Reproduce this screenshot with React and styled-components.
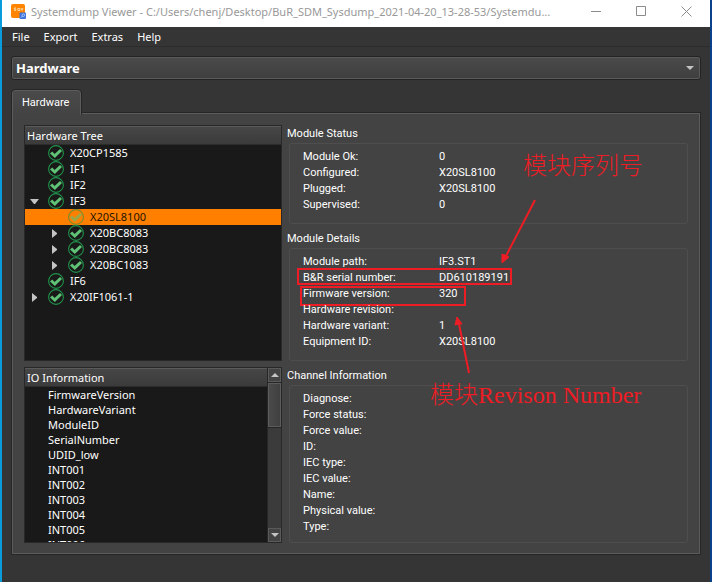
import React from "react";
import styled, { createGlobalStyle } from "styled-components";

const uiFont = `"Noto Sans", "Open Sans", sans-serif`;
const formFont = `Roboto, "Noto Sans", sans-serif`;
const red = "#ee1c24";

const GlobalStyle = createGlobalStyle`
  * { box-sizing: border-box; }
  body { margin: 0; background: #353535; }
  button, select { font: inherit; color: inherit; }
`;

const Desktop = styled.div`
  display: flex;
  height: 100vh;
  min-height: 560px;
  font: 11px/16px ${uiFont};
  color: #fff;
`;

const DesktopEdge = styled.div`
  flex: 0 0 2px;
  background: ${(p) => p.$color};
`;

const Window = styled.main`
  flex: 1;
  min-width: 0;
  display: flex;
  flex-direction: column;
  background: #353535;
`;

const TitleBar = styled.header`
  display: flex;
  align-items: center;
  height: 27px;
  flex: none;
  padding: 0 1px 4px 9px;
  gap: 5px;
  background: #fff;
  color: #999;
`;

const Title = styled.h1`
  flex: 1;
  min-width: 0;
  margin: 0;
  overflow: hidden;
  white-space: nowrap;
  font: 11px/20px ${uiFont};
`;

const WindowButtons = styled.div`
  display: flex;
  flex: none;
`;

const WindowButton = styled.button`
  width: 45px;
  height: 22px;
  padding: 0;
  border: 0;
  background: none;
  display: grid;
  place-items: center;
`;

const MenuBar = styled.nav`
  display: flex;
  gap: 14px;
  height: 20px;
  flex: none;
  padding-left: 10px;
  border-bottom: 1px solid #2c2c2c;
`;

const MenuButton = styled.button`
  padding: 0;
  border: 0;
  background: none;
  line-height: 20px;
`;

const Content = styled.div`
  flex: 1;
  min-height: 0;
  display: flex;
  flex-direction: column;
  padding: 9px 9px 28px;
`;

const ComboWrap = styled.div`
  display: grid;
  align-items: center;
  flex: none;
  height: 24px;
  margin-bottom: 10px;
  border: 1px solid #232323;
  border-radius: 3px;
  & > * { grid-area: 1 / 1; }
  & > svg { justify-self: end; margin-right: 6px; pointer-events: none; }
`;

const Combo = styled.select`
  appearance: none;
  width: 100%;
  height: 22px;
  padding: 0 20px 0 3px;
  border: 1px solid #5a5a5a;
  border-radius: 2px;
  background: linear-gradient(#4a4a4a, #3f3f3f);
  font: bold 13px/20px "Noto Sans", sans-serif;
`;

const Tab = styled.button`
  align-self: flex-start;
  position: relative;
  z-index: 1;
  height: 25px;
  flex: none;
  margin: 0 1px -2px;
  padding: 0 11px 0 9px;
  border: 1px solid #5c5c5c;
  border-bottom: 0;
  border-radius: 3px 3px 0 0;
  outline: 1px solid #262626;
  clip-path: inset(-1px -1px 0 -1px);
  background: linear-gradient(#4a4a4a, #434343);
  font-family: ${formFont};
`;

const TabPanel = styled.section`
  flex: 1;
  min-height: 0;
  display: grid;
  grid-template-columns: minmax(200px, 258fr) minmax(300px, 401fr);
  gap: 5px;
  margin: 0 1px;
  padding: 11px 11px 10px;
  border: 1px solid #5c5c5c;
  box-shadow: 0 0 0 1px #262626;
  background: #434343;
`;

const LeftColumn = styled.div`
  min-height: 0;
  display: flex;
  flex-direction: column;
  gap: 6px;
`;

const ListPane = styled.section`
  flex: ${(p) => p.$share} 1 0;
  min-height: 0;
  display: flex;
  overflow: hidden;
  border: 1px solid #282828;
  background: #191919;
`;

const ListBody = styled.div`
  flex: 1;
  min-width: 0;
`;

const ListHeader = styled.h2`
  height: 19px;
  margin: 0;
  padding-left: 2px;
  border-top: 1px solid #5a5a5a;
  border-bottom: 1px solid #2c2c2c;
  background: linear-gradient(#464646, #3b3b3b);
  font: 11px/18px ${uiFont};
`;

const PlainList = styled.ul`
  margin: 0;
  padding: 0;
  list-style: none;
`;

const TreeRow = styled.li`
  display: grid;
  grid-template-columns: 23px 16px 1fr;
  align-items: center;
  height: 16px;
  padding-left: ${(p) => p.$level * 20}px;
  background: ${(p) => (p.$selected ? "#ff8000" : "transparent")};
  color: ${(p) => (p.$selected ? "#1c1200" : "#fff")};
`;

const TreeLabel = styled.span`
  padding-left: 6px;
  white-space: nowrap;
`;

const Expander = styled.button`
  grid-column: 1;
  width: 19px;
  height: 16px;
  padding: 0;
  border: 0;
  background: none;
  display: grid;
  place-items: center;
`;

const StatusIcon = styled.svg`
  grid-column: 2;
  opacity: ${(p) => (p.$dim ? 0.6 : 1)};
`;

const IoRow = styled.li`
  height: 15px;
  padding-left: 23px;
  line-height: 15px;
`;

const ScrollBar = styled.div`
  flex: 0 0 14px;
  display: flex;
  flex-direction: column;
  border-left: 1px solid #262626;
  background: #3b3b3b;
`;

const ScrollButton = styled.button`
  height: 14px;
  padding: 0;
  border: 1px solid #5a5a5a;
  background: #434343;
  display: grid;
  place-items: center;
`;

const ScrollThumb = styled.div`
  height: 44px;
  margin-top: 1px;
  border: 1px solid #5c5c5c;
  outline: 1px solid #262626;
  background: linear-gradient(90deg, #4a4a4a, #404040);
`;

const ScrollSpace = styled.div`
  flex: 1;
`;

const RightColumn = styled.div`
  position: relative;
  display: flex;
  flex-direction: column;
  gap: 6px;
  font-family: ${formFont};
`;

const Group = styled.section`
  flex: ${(p) => (p.$fill ? "1" : "none")};
  display: flex;
  flex-direction: column;
`;

const GroupTitle = styled.h2`
  margin: 0;
  font: 11px/18px ${formFont};
`;

const GroupFrame = styled.dl`
  flex: 1;
  margin: 0 0 0 2px;
  padding: 5px 12px ${(p) => (p.$fill ? 7 : 10)}px 13px;
  border: 1px solid #4e4e4e;
  border-radius: 3px;
`;

const Field = styled.div`
  position: relative;
  display: grid;
  grid-template-columns: 136px 1fr;
  height: 16px;
  & > dt, & > dd { margin: 0; white-space: pre; }
`;

const Highlight = styled.span`
  position: absolute;
  top: ${(p) => p.$top}px;
  left: ${(p) => p.$left}px;
  width: ${(p) => p.$width}px;
  height: ${(p) => p.$height}px;
  border: 2px solid ${red};
`;

const Note = styled.p`
  position: absolute;
  top: ${(p) => p.$top}px;
  left: ${(p) => p.$left}px;
  margin: 0;
  color: ${red};
  font: 24px/30px "Liberation Serif", "Noto Sans CJK SC", serif;
  font-weight: 300;
  white-space: nowrap;
`;

const Arrows = styled.svg`
  position: absolute;
  top: 0;
  left: 0;
  pointer-events: none;
`;

const tree = [
  { name: "X20CP1585", level: 0 },
  { name: "IF1", level: 0 },
  { name: "IF2", level: 0 },
  { name: "IF3", level: 0, expander: "open" },
  { name: "X20SL8100", level: 1, selected: true },
  { name: "X20BC8083", level: 1, expander: "closed" },
  { name: "X20BC8083", level: 1, expander: "closed" },
  { name: "X20BC1083", level: 1, expander: "closed" },
  { name: "IF6", level: 0 },
  { name: "X20IF1061-1", level: 0, expander: "closed" },
];

const channels = [
  "FirmwareVersion", "HardwareVariant", "ModuleID", "SerialNumber", "UDID_low",
  "INT001", "INT002", "INT003", "INT004", "INT005", "INT006",
];

const statusFields = [
  ["Module Ok:", "0"],
  ["Configured:", "X20SL8100"],
  ["Plugged:", "X20SL8100"],
  ["Supervised:", "0"],
];

const detailFields = [
  ["Module path:", "IF3.ST1"],
  ["B&R serial number:", "DD610189191", { $top: -2, $left: -6, $width: 215, $height: 17 }],
  ["Firmware version:", "320", { $top: 0, $left: -3, $width: 166, $height: 20 }],
  ["Hardware revision:", ""],
  ["Hardware variant:", "1"],
  ["Equipment ID:", "X20SL8100"],
];

const channelFields = [
  "Diagnose:", "Force status:", "Force value:", "ID:", "IEC type:",
  "IEC value:", "Name:", "Physical value:", "Type:",
].map((label) => [label, ""]);

const triangles = {
  up: ["0,4 4,0 8,4", 8, 4],
  down: ["0,0 8,0 4,4", 8, 4],
  open: ["0,0 9,0 5,5 4,5", 9, 5],
  closed: ["0,0 5,4 5,5 0,9", 5, 9],
};

function Triangle({ kind }) {
  const [points, w, h] = triangles[kind];
  return (
    <svg width={w} height={h} aria-hidden="true">
      <polygon points={points} fill="#c4c4c4" />
    </svg>
  );
}

function Check({ dim }) {
  return (
    <StatusIcon width="16" height="16" viewBox="0 0 16 16" $dim={dim} aria-hidden="true">
      <circle cx="8" cy="8" r="7.4" fill="none" stroke="#20914a" strokeWidth="1.1" />
      <path d="M2 8.4 4.2 6.6 6.6 8.9 12 4 14 6 6.8 12.9Z" fill="#5fc276" />
    </StatusIcon>
  );
}

function AppIcon() {
  return (
    <svg width="15" height="15" viewBox="0 0 15 15" aria-hidden="true">
      <rect width="14" height="14" rx="2" fill="#ff8500" />
      <path d="M5 4H3.2V5.2H4.8V6.5H3M8.8 6.5V4.5H6.8V6.5H9M10 4l1 2.4L12 4" fill="none" stroke="#ffe3bd" strokeWidth=".8" />
      <rect x="8.5" y="8.5" width="6.5" height="6.5" rx="1" fill="#3b72dc" />
      <circle cx="12.3" cy="11.2" r="1.3" fill="none" stroke="#c3d8ff" strokeWidth=".8" />
      <path d="m11.4 12.1-1.6 1.6" stroke="#c3d8ff" strokeWidth=".8" />
    </svg>
  );
}

function FieldGroup({ title, fields, fill }) {
  return (
    <Group $fill={fill}>
      <GroupTitle>{title}</GroupTitle>
      <GroupFrame $fill={fill}>
        {fields.map(([label, value, mark]) => (
          <Field key={label}>
            <dt>{label}</dt>
            <dd>{value}</dd>
            {mark && <Highlight {...mark} />}
          </Field>
        ))}
      </GroupFrame>
    </Group>
  );
}

export default function App() {
  return (
    <Desktop>
      <GlobalStyle />
      <DesktopEdge $color="#0a9bdc" />
      <Window>
        <TitleBar>
          <AppIcon />
          <Title>Systemdump Viewer - C:/Users/chenj/Desktop/BuR_SDM_Sysdump_2021-04-20_13-28-53/Systemdu...</Title>
          <WindowButtons>
            <WindowButton aria-label="Minimize">
              <svg width="11" height="11"><path d="M0 5.5h10" stroke="#8c8c8c" /></svg>
            </WindowButton>
            <WindowButton aria-label="Maximize">
              <svg width="11" height="11"><path d="M.5.5h9v9h-9z" fill="none" stroke="#8c8c8c" /></svg>
            </WindowButton>
            <WindowButton aria-label="Close">
              <svg width="11" height="11"><path d="m.5.5 10 10m0-10-10 10" stroke="#8c8c8c" /></svg>
            </WindowButton>
          </WindowButtons>
        </TitleBar>
        <MenuBar>
          {["File", "Export", "Extras", "Help"].map((m) => <MenuButton key={m}>{m}</MenuButton>)}
        </MenuBar>
        <Content>
          <ComboWrap>
            <Combo aria-label="View" defaultValue="Hardware">
              <option>Hardware</option>
            </Combo>
            <Triangle kind="down" />
          </ComboWrap>
          <Tab role="tab" aria-selected="true">Hardware</Tab>
          <TabPanel role="tabpanel">
            <LeftColumn>
              <ListPane $share={236}>
                <ListBody>
                  <ListHeader>Hardware Tree</ListHeader>
                  <PlainList role="tree" aria-label="Hardware Tree">
                    {tree.map((n, i) => (
                      <TreeRow key={i} role="treeitem" aria-selected={!!n.selected} $level={n.level} $selected={n.selected}>
                        {n.expander && (
                          <Expander aria-label={n.expander === "open" ? "Collapse" : "Expand"}>
                            <Triangle kind={n.expander} />
                          </Expander>
                        )}
                        <Check dim={n.selected} />
                        <TreeLabel>{n.name}</TreeLabel>
                      </TreeRow>
                    ))}
                  </PlainList>
                </ListBody>
              </ListPane>
              <ListPane $share={176}>
                <ListBody>
                  <ListHeader>IO Information</ListHeader>
                  <PlainList>
                    {channels.map((c) => <IoRow key={c}>{c}</IoRow>)}
                  </PlainList>
                </ListBody>
                <ScrollBar>
                  <ScrollButton aria-label="Scroll up"><Triangle kind="up" /></ScrollButton>
                  <ScrollThumb />
                  <ScrollSpace />
                  <ScrollButton aria-label="Scroll down"><Triangle kind="down" /></ScrollButton>
                </ScrollBar>
              </ListPane>
            </LeftColumn>
            <RightColumn>
              <FieldGroup title="Module Status" fields={statusFields} />
              <FieldGroup title="Module Details" fields={detailFields} />
              <FieldGroup title="Channel Information" fields={channelFields} fill />
              <Arrows width="260" height="260" viewBox="0 0 260 260" aria-hidden="true">
                <g stroke={red} strokeWidth="2" fill={red}>
                  <path d="M248 75 219 131" />
                  <path d="m215 138 0-9 3 1 4 2Z" strokeWidth="1" />
                  <path d="M182 248 172 199" />
                  <path d="m170 192 5 7-3 0-4 1Z" strokeWidth="1" />
                </g>
              </Arrows>
              <Note $top={26} $left={236}>模块序列号</Note>
              <Note $top={255} $left={143}>模块Revison Number</Note>
            </RightColumn>
          </TabPanel>
        </Content>
      </Window>
      <DesktopEdge $color="#0b418c" />
    </Desktop>
  );
}
